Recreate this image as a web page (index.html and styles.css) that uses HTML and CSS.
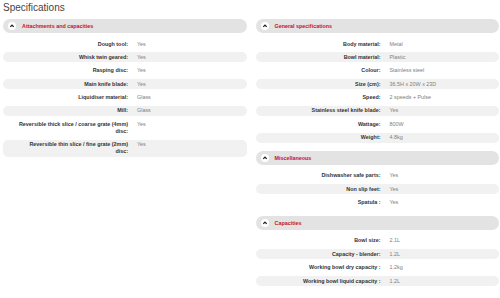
FILE: index.html
```html
<!DOCTYPE html>
<html>
<head>
<meta charset="utf-8">
<link rel="stylesheet" href="styles.css">
</head>
<body>
<div class="page">
  <h1 class="title">Specifications</h1>
  <div class="cols">
    <div class="col">
      <section class="sec">
        <div class="head"><span class="ico"><svg viewBox="0 0 8 8" width="8" height="8"><circle cx="4" cy="4" r="4" fill="#fff"/><path d="M2.3 4.9 L4 3.1 L5.7 4.9" fill="none" stroke="#222" stroke-width="1.3"/></svg></span><span class="htxt">Attachments and capacities</span></div>
        <div class="rows">
          <div class="row"><div class="lab">Dough tool:</div><div class="val">Yes</div></div>
          <div class="row alt"><div class="lab">Whisk twin geared:</div><div class="val">Yes</div></div>
          <div class="row"><div class="lab">Rasping disc:</div><div class="val">Yes</div></div>
          <div class="row alt"><div class="lab">Main knife blade:</div><div class="val">Yes</div></div>
          <div class="row"><div class="lab">Liquidiser material:</div><div class="val">Glass</div></div>
          <div class="row alt"><div class="lab">Mill:</div><div class="val">Glass</div></div>
          <div class="row"><div class="lab">Reversible thick slice / coarse grate (4mm) disc:</div><div class="val">Yes</div></div>
          <div class="row alt"><div class="lab">Reversible thin slice / fine grate (2mm) disc:</div><div class="val">Yes</div></div>
        </div>
      </section>
    </div>
    <div class="col">
      <section class="sec">
        <div class="head"><span class="ico"><svg viewBox="0 0 8 8" width="8" height="8"><circle cx="4" cy="4" r="4" fill="#fff"/><path d="M2.3 4.9 L4 3.1 L5.7 4.9" fill="none" stroke="#222" stroke-width="1.3"/></svg></span><span class="htxt">General specifications</span></div>
        <div class="rows">
          <div class="row"><div class="lab">Body material:</div><div class="val">Metal</div></div>
          <div class="row alt"><div class="lab">Bowl material:</div><div class="val">Plastic</div></div>
          <div class="row"><div class="lab">Colour:</div><div class="val">Stainless steel</div></div>
          <div class="row alt"><div class="lab">Size (cm):</div><div class="val">36.5H x 20W x 23D</div></div>
          <div class="row"><div class="lab">Speed:</div><div class="val">2 speeds + Pulse</div></div>
          <div class="row alt"><div class="lab">Stainless steel knife blade:</div><div class="val">Yes</div></div>
          <div class="row"><div class="lab">Wattage:</div><div class="val">800W</div></div>
          <div class="row alt"><div class="lab">Weight:</div><div class="val">4.8kg</div></div>
        </div>
      </section>
      <section class="sec">
        <div class="head"><span class="ico"><svg viewBox="0 0 8 8" width="8" height="8"><circle cx="4" cy="4" r="4" fill="#fff"/><path d="M2.3 4.9 L4 3.1 L5.7 4.9" fill="none" stroke="#222" stroke-width="1.3"/></svg></span><span class="htxt">Miscellaneous</span></div>
        <div class="rows">
          <div class="row"><div class="lab">Dishwasher safe parts:</div><div class="val">Yes</div></div>
          <div class="row alt"><div class="lab">Non slip feet:</div><div class="val">Yes</div></div>
          <div class="row"><div class="lab">Spatula :</div><div class="val">Yes</div></div>
        </div>
      </section>
      <section class="sec">
        <div class="head"><span class="ico"><svg viewBox="0 0 8 8" width="8" height="8"><circle cx="4" cy="4" r="4" fill="#fff"/><path d="M2.3 4.9 L4 3.1 L5.7 4.9" fill="none" stroke="#222" stroke-width="1.3"/></svg></span><span class="htxt">Capacities</span></div>
        <div class="rows">
          <div class="row"><div class="lab">Bowl size:</div><div class="val">2.1L</div></div>
          <div class="row alt"><div class="lab">Capacity - blender:</div><div class="val">1.2L</div></div>
          <div class="row"><div class="lab">Working bowl dry capacity :</div><div class="val">1.2kg</div></div>
          <div class="row alt"><div class="lab">Working bowl liquid capacity :</div><div class="val">1.2L</div></div>
        </div>
      </section>
    </div>
  </div>
</div>
</body>
</html>
```
FILE: styles.css
```css
html, body {
  margin: 0;
  padding: 0;
  background: #fff;
}
.page {
  width: 496px;
  padding: 0 1px 0 3px;
  font-family: "Liberation Sans", Arial, sans-serif;
}
.title {
  margin: 0;
  height: 19px;
  font-size: 10px;
  line-height: 16px;
  font-weight: normal;
  color: #444;
}
.cols {
  display: grid;
  grid-template-columns: 1fr 1fr;
  column-gap: 9px;
  align-items: start;
}
.sec {
  margin-bottom: 8.2px;
}
.head {
  display: flex;
  align-items: center;
  height: 14px;
  border-radius: 7px;
  background: #e3e3e3;
  padding-left: 5px;
}
.ico {
  display: flex;
  width: 8px;
  height: 8px;
  margin-right: 6px;
}
.htxt {
  font-size: 5.4px;
  font-weight: bold;
  color: #c8102e;
}
.rows {
  display: flex;
  flex-direction: column;
  gap: 3.4px;
  margin-top: 6px;
}
.row {
  display: flex;
  align-items: flex-start;
  padding: 1.5px 0;
  border-radius: 5px;
  font-size: 5.4px;
  line-height: 7px;
}
.row.alt {
  background: #f1f1f1;
}
.lab {
  width: 125px;
  flex: none;
  box-sizing: border-box;
  padding-left: 14px;
  text-align: right;
  font-weight: bold;
  color: #333;
}
.val {
  padding-left: 9px;
  color: #808080;
}
```
